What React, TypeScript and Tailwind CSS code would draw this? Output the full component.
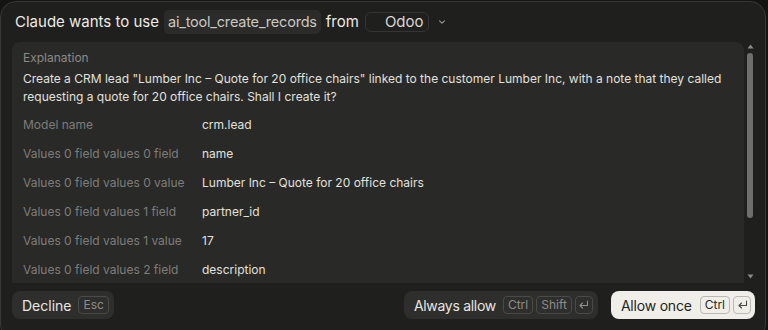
import React from "react";

const rows: [string, string][] = [
  ["Model name", "crm.lead"],
  ["Values 0 field values 0 field", "name"],
  ["Values 0 field values 0 value", "Lumber Inc – Quote for 20 office chairs"],
  ["Values 0 field values 1 field", "partner_id"],
  ["Values 0 field values 1 value", "17"],
  ["Values 0 field values 2 field", "description"],
];

function Kbd({ children, light }: { children: React.ReactNode; light?: boolean }) {
  return (
    <span
      className={
        light
          ? "flex h-[18px] min-w-[17px] items-center justify-center rounded-[4px] border border-[#b9b8b3] px-[4px] text-[12px] text-[#2a2a28]"
          : "flex h-[18px] min-w-[17px] items-center justify-center rounded-[4px] border border-[#4a4a47] px-[4px] text-[12px] text-[#8d8c88]"
      }
    >
      {children}
    </span>
  );
}

function EnterKbd({ light }: { light?: boolean }) {
  const color = light ? "#4a4a47" : "#8d8c88";
  return (
    <span
      className={
        light
          ? "flex h-[18px] w-[18px] items-center justify-center rounded-[4px] border border-[#b9b8b3]"
          : "flex h-[18px] w-[18px] items-center justify-center rounded-[4px] border border-[#4a4a47]"
      }
    >
      <svg width="11" height="10" viewBox="0 0 11 10" fill="none">
        <path d="M9.5 1v4.5H2M4.5 3L2 5.5 4.5 8" stroke={color} strokeWidth="1.1" strokeLinecap="round" strokeLinejoin="round" />
      </svg>
    </span>
  );
}

export default function App() {
  return (
    <div
      className="h-[330px] w-[768px] overflow-hidden bg-[#141414] pt-px"
      style={{ fontFamily: "Inter, 'Noto Sans', sans-serif" }}
    >
      <div className="flex h-[340px] w-[766px] flex-col rounded-[16px] border border-[#383836] bg-[#1f1f1d]">
        <div className="flex h-[40px] items-center pl-[14px] text-[15px] text-[#ecebe7]">
          <span>Claude wants to use</span>
          <span className="ml-[5px] rounded-[5px] bg-[#2b2b29] px-[4px] py-[1px] text-[14.5px] tracking-[-0.2px] text-[#c9c8c3]">ai_tool_create_records</span>
          <span className="ml-[5px]">from</span>
          <span className="ml-[6px] flex h-[20px] items-center rounded-[6px] border border-[#353533] pl-[19px] pr-[4px] text-[#d8d7d2]">
            Odoo
          </span>
          <svg className="ml-[8px]" width="10" height="10" viewBox="0 0 10 10" fill="none">
            <path d="M2.5 3.8L5 6.2 7.5 3.8" stroke="#9a9994" strokeWidth="1.1" strokeLinecap="round" strokeLinejoin="round" />
          </svg>
        </div>
        <div className="flex h-[241px] pl-[11px] pr-[9px]">
          <div className="flex-1 overflow-hidden rounded-t-[8px] bg-[#292928] pl-[11px] pr-[8px] pt-[7px]">
            <div className="text-[12px] leading-[18px] text-[#8b8a86]">Explanation</div>
            <div className="mt-[3px] text-[12px] leading-[18px] text-[#e2e1dd]">
              Create a CRM lead "Lumber Inc – Quote for 20 office chairs" linked to the customer Lumber Inc, with a note that they called requesting a quote for 20 office chairs. Shall I create it?
            </div>
            <div className="mt-[4px] flex flex-col">
              {rows.map(([k, v]) => (
                <div key={k} className="flex h-[29px] items-center text-[12px]">
                  <span className="w-[179px] text-[#7e7d79]">{k}</span>
                  <span className="text-[#e2e1dd]">{v}</span>
                </div>
              ))}
            </div>
          </div>
          <div className="flex w-[12px] flex-col items-center pt-[2px]">
            <svg width="7" height="5" viewBox="0 0 7 5"><path d="M3.5 0.5L6.5 4.5H0.5Z" fill="#8a8a86" /></svg>
            <div className="mt-[4px] h-[165px] w-[6px] rounded-full bg-[#6e6e6b]" />
            <div className="flex-1" />
            <svg className="mb-[4px]" width="7" height="5" viewBox="0 0 7 5"><path d="M3.5 4.5L6.5 0.5H0.5Z" fill="#8a8a86" /></svg>
          </div>
        </div>
        <div className="flex items-center pl-[11px] pr-[10px] pt-[8px]">
          <button className="flex h-[28px] items-center gap-[7px] rounded-[8px] bg-[#2e2e2c] pl-[10px] pr-[5px] text-[14px] text-[#e8e7e3]">
            Decline <Kbd>Esc</Kbd>
          </button>
          <div className="flex-1" />
          <button className="flex h-[28px] items-center gap-[3px] rounded-[8px] bg-[#2e2e2c] pl-[10px] pr-[5px] text-[14px] text-[#e8e7e3]">
            <span className="mr-[4px] tracking-[-0.3px]">Always allow</span>
            <Kbd>Ctrl</Kbd>
            <Kbd>Shift</Kbd>
            <EnterKbd />
          </button>
          <button className="ml-[13px] flex h-[28px] items-center gap-[3px] rounded-[8px] bg-[#efeee9] pl-[10px] pr-[4px] text-[14px] text-[#1f1f1d]">
            <span className="mr-[5px] tracking-[-0.2px]">Allow once</span>
            <Kbd light>Ctrl</Kbd>
            <EnterKbd light />
          </button>
        </div>
      </div>
    </div>
  );
}
